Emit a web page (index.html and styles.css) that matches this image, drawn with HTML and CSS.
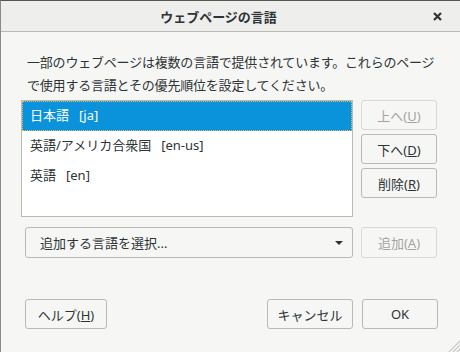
FILE: index.html
```html
<!DOCTYPE html>
<html lang="ja">
<head>
    <meta charset="UTF-8">
    <meta name="viewport" content="width=device-width, initial-scale=1.0">
    <title>ウェブページの言語</title>
    <link rel="stylesheet" href="styles.css">
</head>
<body>
    <div class="window">
        <div class="titlebar">
            <span class="title">ウェブページの言語</span>
            <span class="close">
                <svg width="9" height="9" viewBox="0 0 9 9">
                    <path d="M1 1 L8 8 M8 1 L1 8" stroke="#2e3436" stroke-width="2.2"/>
                </svg>
            </span>
        </div>

        <div class="dialog">
            <p class="intro">一部のウェブページは複数の言語で提供されています。これらのページで使用する言語とその優先順位を設定してください。</p>

            <div class="list-row">
                <div class="listbox">
                    <div class="item selected">日本語<span class="code">[ja]</span></div>
                    <div class="item">英語/アメリカ合衆国<span class="code">[en-us]</span></div>
                    <div class="item">英語<span class="code">[en]</span></div>
                </div>
                <div class="side-buttons">
                    <button class="btn" disabled>上へ(<u>U</u>)</button>
                    <button class="btn">下へ(<u>D</u>)</button>
                    <button class="btn">削除(<u>R</u>)</button>
                </div>
            </div>

            <div class="add-row">
                <div class="select">
                    <span>追加する言語を選択...</span>
                    <span class="arrow"></span>
                </div>
                <button class="btn" disabled>追加(<u>A</u>)</button>
            </div>

            <div class="footer">
                <button class="btn help">ヘルプ(<u>H</u>)</button>
                <div class="footer-right">
                    <button class="btn cancel">キャンセル</button>
                    <button class="btn">OK</button>
                </div>
            </div>
        </div>

        <svg class="grip" width="13" height="12" viewBox="0 0 13 12">
            <path d="M13 1 L2 12 M13 5 L6 12 M13 9 L10 12" stroke="#c8c8c5" stroke-width="1.2"/>
        </svg>
    </div>
</body>
</html>
```

FILE: styles.css
```css
* {
    box-sizing: border-box;
}

body {
    margin: 0;
    padding: 0;
    font-family: "Noto Sans", "Noto Sans CJK JP", sans-serif;
    font-size: 13px;
    color: #2e3436;
    background-color: #f6f7f5;
}

.window {
    position: relative;
    width: 460px;
    height: 352px;
    border-top: 1px solid #555753;
    border-left: 1px solid #8a8a88;
    background-color: #f6f7f5;
}

.titlebar {
    display: flex;
    align-items: center;
    height: 31px;
    background-color: #eeeeec;
    border-bottom: 1px solid #b9b9b6;
}

.title {
    flex: 1;
    text-align: center;
    font-weight: bold;
    font-size: 13px;
    padding-left: 6px;
}

.close {
    display: flex;
    width: 30px;
    padding-left: 3px;
}

.dialog {
    padding: 19px 22px 0 20px;
}

.intro {
    margin: 0 0 3px 6px;
    line-height: 23px;
    font-size: 13px;
    letter-spacing: -0.2px;
}

.list-row {
    display: flex;
    gap: 8px;
}

.listbox {
    width: 332px;
    height: 117px;
    border: 1px solid #b9b9b6;
    background-color: #fff;
}

.item {
    height: 30px;
    line-height: 29px;
    padding-left: 8px;
}

.item.selected {
    background-color: #0a93da;
    color: #fff;
    outline: 1px dotted #e8c15a;
    outline-offset: -1px;
}

.code {
    margin-left: 10px;
}

.side-buttons {
    display: flex;
    flex-direction: column;
    gap: 4px;
}

.btn {
    width: 76px;
    height: 30px;
    padding: 0;
    font-family: "Noto Sans", "Noto Sans CJK JP", sans-serif;
    font-size: 13px;
    color: #2e3436;
    background-color: #f6f7f5;
    border: 1px solid #b9b9b6;
    border-radius: 3px;
}

.btn:disabled {
    color: #a3a4a2;
    border-color: #d8d8d5;
}

.add-row {
    display: flex;
    gap: 8px;
    margin: 10px 0 0 4px;
}

.select {
    display: flex;
    align-items: center;
    justify-content: space-between;
    width: 328px;
    height: 31px;
    padding: 0 9px 0 14px;
    border: 1px solid #b9b9b6;
    border-radius: 3px;
}

.arrow {
    width: 0;
    height: 0;
    border-left: 4px solid transparent;
    border-right: 4px solid transparent;
    border-top: 4px solid #2e3436;
}

.add-row .btn {
    height: 31px;
}

.footer {
    display: flex;
    justify-content: space-between;
    margin: 41px 0 0 4px;
}

.footer-right {
    display: flex;
    gap: 9px;
}

.help {
    width: 82px;
}

.cancel {
    width: 86px;
}

.grip {
    position: absolute;
    right: 0;
    bottom: 0;
}
```
